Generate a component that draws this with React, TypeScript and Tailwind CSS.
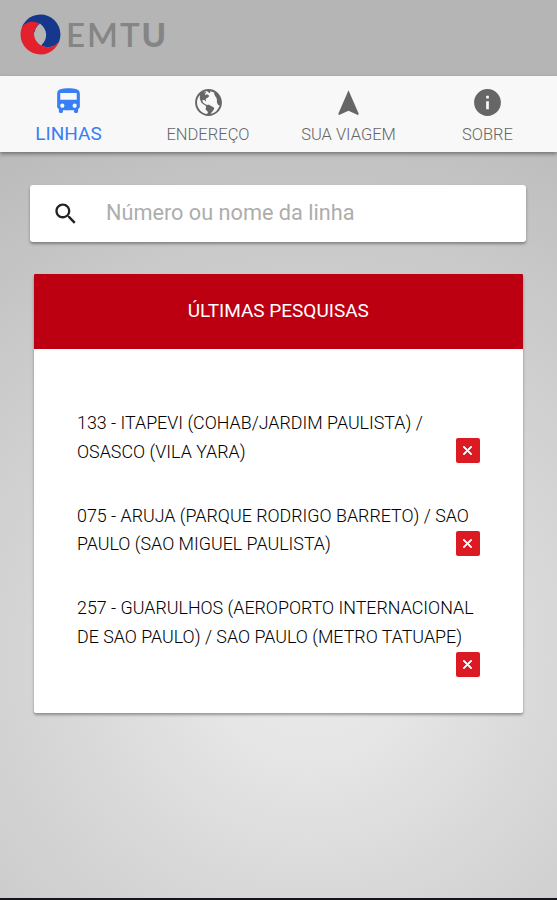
import React, { useState } from 'react';
import {
  IoMdBus,
  IoMdClose,
  IoMdGlobe,
  IoMdInformationCircle,
  IoMdNavigate,
  IoMdSearch,
} from 'react-icons/io';

const tabs = [
  { icon: IoMdBus, label: 'LINHAS' },
  { icon: IoMdGlobe, label: 'ENDEREÇO' },
  { icon: IoMdNavigate, label: 'SUA VIAGEM' },
  { icon: IoMdInformationCircle, label: 'SOBRE' },
];

const initialSearches = [
  '133 - ITAPEVI (COHAB/JARDIM PAULISTA) / OSASCO (VILA YARA)',
  '075 - ARUJA (PARQUE RODRIGO BARRETO) / SAO PAULO (SAO MIGUEL PAULISTA)',
  '257 - GUARULHOS (AEROPORTO INTERNACIONAL DE SAO PAULO) / SAO PAULO (METRO TATUAPE)',
];

const Logo: React.FC = () => (
  <div className="flex items-center">
    <svg viewBox="-0.500 -0.500 41 41" className="w-[41px] h-[41px]">
      <path d="M38.500 27.500A19.960 19.960 0 0 0 1.500 12.500L19.500 20L21 31Z" fill="#15388c" />
      <path d="M19 9L19.500 9L21 31C27 34 34 33 38.500 27.500L30 15Z" fill="#15388c" />
      <path d="M1.500 12.500C5 7.500 12 5.500 19 9C11.500 15 11.500 25 21 31C27 34 34 33 38.500 27.500A19.960 19.960 0 0 1 1.500 12.500Z" fill="#e3202b" />
      <path d="M19.500 9C27.500 15 27.500 25 20.500 31C12 26 12 14 19.500 9Z" fill="#b5b5b5" />
    </svg>
    <span className="ml-[5px] mb-[2px] font-['Lato',sans-serif] text-[33px] leading-[38px] tracking-[2px] font-semibold text-[#858585]">
      EMT<span className="font-black">U</span>
    </span>
  </div>
);

const App: React.FC = () => {
  const [activeTab, setActiveTab] = useState(0);
  const [searches, setSearches] = useState(initialSearches);

  return (
    <div className="h-[900px] flex flex-col font-['Roboto',sans-serif] bg-[radial-gradient(ellipse_640px_620px_at_310px_660px,#ebebeb_0%,#e6e6e6_15%,#d6d6d6_42%,#cbcbcb_65%,#b8b8b8_100%)] border-b-2 border-[#15151a]">
      {/* Header */}
      <header className="h-[76px] shrink-0 bg-[#b5b5b5] pl-[20px] pt-[14px]">
        <Logo />
      </header>

      {/* Tabs */}
      <nav className="h-[76px] shrink-0 grid grid-cols-[137px_142px_139px_139px] bg-[#f8f8f8] shadow-[0_2px_4px_rgba(0,0,0,0.4)]">
        {tabs.map((tab, index) => {
          const Icon = tab.icon;
          const active = index === activeTab;
          return (
            <button
              key={tab.label}
              onClick={() => setActiveTab(index)}
              className={`flex flex-col items-center whitespace-nowrap ${
                active ? 'text-[#387ef5] pt-[8px]' : 'text-[#666] pt-[10px]'
              }`}
            >
              <Icon className="w-[33px] h-[33px]" />
              <span
                className={
                  active
                    ? 'text-[19px] leading-[33px]'
                    : 'text-[16.500px] leading-[31px] font-light'
                }
              >
                {tab.label}
              </span>
            </button>
          );
        })}
      </nav>

      {/* Search */}
      <div className="mt-[33px] ml-[30px] mr-[31px] h-[57px] shrink-0 flex items-center bg-white rounded-[3px] shadow-[0_2px_3px_rgba(0,0,0,0.35)]">
        <IoMdSearch className="ml-[22px] w-[27px] h-[27px] text-[#222]" />
        <input
          type="text"
          placeholder="Número ou nome da linha"
          className="ml-[27px] mb-px flex-1 text-[21.700px] outline-none placeholder:text-[#adadad]"
        />
      </div>

      {/* Recent searches */}
      <section className="mt-[32px] ml-[33.500px] mr-[34px] h-[438.500px] shrink-0 bg-white rounded-[2px] shadow-[0_2px_3px_rgba(0,0,0,0.35)]">
        <h2 className="h-[75px] pb-[1px] flex items-center justify-center rounded-t-[1px] bg-[#bd0011] text-[19px] text-white">
          ÚLTIMAS PESQUISAS
        </h2>
        <ul className="pt-[60px] pl-[43.500px] pr-[43.500px] space-y-[35px]">
          {searches.map((line) => (
            <li key={line} className="text-[17.850px] leading-[28.800px] font-light text-black">
              {line}
              <button
                aria-label="Remover"
                onClick={() => setSearches(searches.filter((s) => s !== line))}
                className="float-right mt-[0.500px] w-[24px] h-[25px] flex items-center justify-center rounded-[2px] bg-[#db1a23] text-white"
              >
                <IoMdClose className="w-[15px] h-[15px] stroke-[30px]" />
              </button>
            </li>
          ))}
        </ul>
      </section>
    </div>
  );
};

export default App;
